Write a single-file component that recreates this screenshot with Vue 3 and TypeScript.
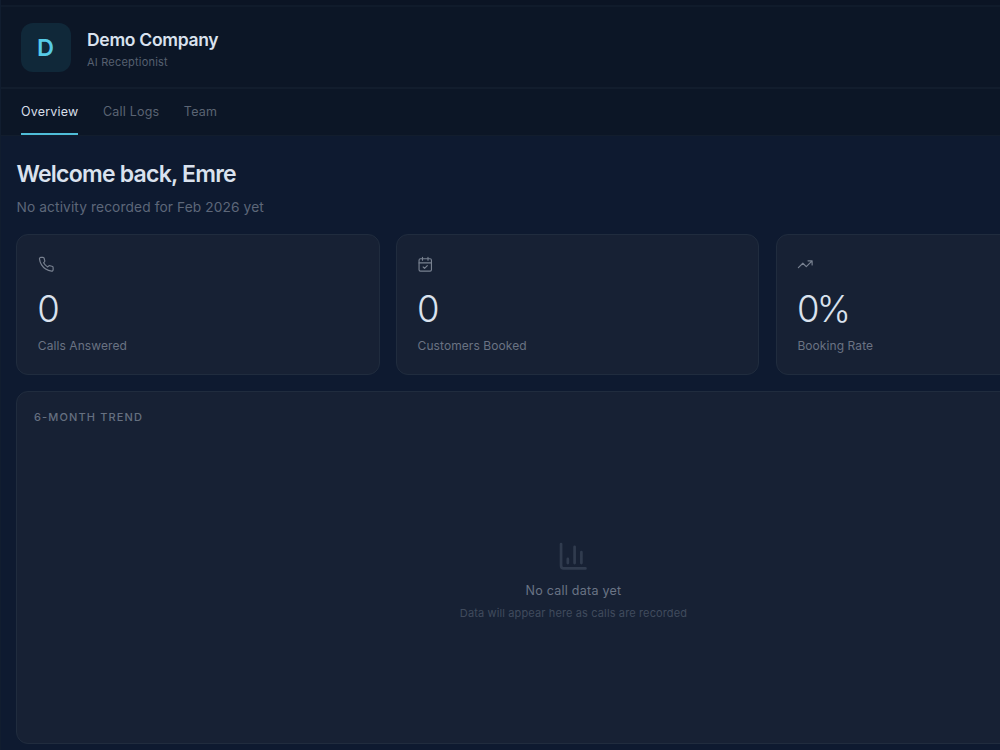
<script setup lang="ts">
interface Tab {
  label: string
  active: boolean
}

interface Stat {
  icon: 'phone' | 'calendar' | 'trend'
  value: string
  label: string
}

const tabs: Tab[] = [
  { label: 'Overview', active: true },
  { label: 'Call Logs', active: false },
  { label: 'Team', active: false },
]

const stats: Stat[] = [
  { icon: 'phone', value: '0', label: 'Calls Answered' },
  { icon: 'calendar', value: '0', label: 'Customers Booked' },
  { icon: 'trend', value: '0%', label: 'Booking Rate' },
]
</script>

<template>
  <div class="app">
    <header class="header">
      <div class="logo">D</div>
      <div class="brand">
        <div class="company">Demo Company</div>
        <div class="product">AI Receptionist</div>
      </div>
    </header>

    <nav class="tabs">
      <a v-for="tab in tabs" :key="tab.label" class="tab" :class="{ active: tab.active }">{{ tab.label }}</a>
    </nav>

    <main class="content">
      <h1 class="title">Welcome back, Emre</h1>
      <p class="subtitle">No activity recorded for Feb 2026 yet</p>

      <section class="stats">
        <article v-for="stat in stats" :key="stat.label" class="card">
          <svg class="stat-icon" viewBox="0 0 24 24">
            <path
              v-if="stat.icon === 'phone'"
              d="M22 16.92v3a2 2 0 0 1-2.18 2 19.79 19.79 0 0 1-8.63-3.07 19.5 19.5 0 0 1-6-6 19.79 19.79 0 0 1-3.07-8.67A2 2 0 0 1 4.11 2h3a2 2 0 0 1 2 1.72 12.84 12.84 0 0 0 .7 2.81 2 2 0 0 1-.45 2.11L8.09 9.91a16 16 0 0 0 6 6l1.27-1.27a2 2 0 0 1 2.11-.45 12.84 12.84 0 0 0 2.81.7A2 2 0 0 1 22 16.92z"
            />
            <template v-else-if="stat.icon === 'calendar'">
              <path d="M8 2v4M16 2v4M3 10h18" />
              <rect x="3" y="4" width="18" height="18" rx="2" />
              <path d="m9 16 2 2 4-4" />
            </template>
            <path v-else d="M16 7h6v6M22 7l-8.5 8.5-5-5L2 17" />
          </svg>
          <div class="value">{{ stat.value }}</div>
          <div class="label">{{ stat.label }}</div>
        </article>
      </section>

      <section class="panel">
        <h2 class="panel-title">6-Month Trend</h2>
        <div class="empty">
          <svg class="empty-icon" viewBox="0 0 24 24">
            <path d="M3 3v16a2 2 0 0 0 2 2h16M18 17V9M13 17V5M8 17v-3" />
          </svg>
          <div class="empty-title">No call data yet</div>
          <div class="empty-text">Data will appear here as calls are recorded</div>
        </div>
      </section>
    </main>
  </div>
</template>

<style>
body {
  overflow: hidden;
  background: #0e1a30;
}
</style>

<style scoped>
.app {
  box-sizing: border-box;
  width: 1000px;
  height: 750px;
  overflow: hidden;
  padding-top: 5px;
  border-left: 1px solid #111d2f;
  background: #0b1424;
  color: #dae2ee;
  font-family: Inter, "Liberation Sans", sans-serif;
}

.header {
  box-sizing: border-box;
  height: 84px;
  display: flex;
  align-items: center;
  gap: 16px;
  padding-left: 20px;
  border-top: 2px solid #101b2b;
  border-bottom: 2px solid #121d2d;
  background: #0c1626;
}

.logo {
  width: 50px;
  height: 49px;
  border-radius: 12px;
  background: #102839;
  color: #56cbe7;
  font-size: 23.5px;
  font-weight: 600;
  line-height: 50px;
  text-align: center;
  text-indent: -1px;
}

.brand {
  padding-top: 3px;
}

.company {
  font-size: 17.5px;
  font-weight: 600;
  line-height: 26px;
  letter-spacing: -0.3px;
}

.product {
  margin-top: 1px;
  color: #566070;
  font-size: 11px;
  line-height: 17px;
  letter-spacing: 0.2px;
}

.tabs {
  box-sizing: border-box;
  height: 47px;
  display: flex;
  gap: 24.5px;
  padding-left: 20px;
  border-bottom: 1px solid #121d2d;
  background: #0c1626;
}

.tab {
  box-sizing: border-box;
  height: 46px;
  border-bottom: 2px solid transparent;
  color: #5b6473;
  font-size: 12.5px;
  line-height: 45px;
  letter-spacing: 0.2px;
}

.tab.active {
  border-bottom-color: #4fbdd8;
  color: #d8dfe9;
}

.content {
  height: 614px;
  padding: 22px 0 0 15px;
  background: #0e1a30;
}

.title {
  margin: 0;
  padding-left: 0.5px;
  font-size: 23px;
  font-weight: 600;
  line-height: 32px;
  letter-spacing: -0.77px;
}

.subtitle {
  margin: 7px 0 0;
  padding-left: 0.5px;
  color: #5d6779;
  font-size: 13.75px;
  line-height: 20px;
  letter-spacing: 0.1px;
}

.stats {
  display: grid;
  grid-template-columns: repeat(3, 363.5px);
  gap: 16.3px;
  margin-top: 17px;
}

.card {
  box-sizing: border-box;
  height: 141px;
  padding: 20.5px 20.8px;
  border: 1px solid #202c3e;
  border-radius: 12px;
  background: #172134;
}

.stat-icon {
  display: block;
  width: 16.5px;
  height: 16.5px;
  margin-left: -0.3px;
  fill: none;
  stroke: #788190;
  stroke-width: 1.7;
  stroke-linecap: round;
  stroke-linejoin: round;
}

.value {
  margin-top: 16px;
  font-size: 36.5px;
  font-weight: 300;
  line-height: 42px;
  letter-spacing: -2.8px;
  text-indent: -0.5px;
}

.label {
  margin-top: 7px;
  color: #6a7383;
  font-size: 12px;
  line-height: 18px;
  letter-spacing: 0.08px;
}

.panel {
  box-sizing: border-box;
  width: 1123px;
  height: 353px;
  margin-top: 16px;
  padding: 16px 25px 16px 17px;
  border: 1px solid #202c3e;
  border-radius: 12px;
  background: #172134;
}

.panel-title {
  margin: 0;
  color: #667080;
  font-size: 11px;
  font-weight: 500;
  line-height: 18px;
  letter-spacing: 1.13px;
  text-transform: uppercase;
}

.empty {
  display: flex;
  flex-direction: column;
  align-items: center;
  padding-top: 113.5px;
}

.empty-icon {
  width: 32.5px;
  height: 32.5px;
  fill: none;
  stroke: #303b4e;
  stroke-width: 2;
  stroke-linecap: round;
  stroke-linejoin: round;
}

.empty-title {
  margin-top: 10px;
  color: #6a7485;
  font-size: 12.5px;
  line-height: 18px;
  letter-spacing: 0.25px;
}

.empty-text {
  margin-top: 5px;
  color: #404b5d;
  font-size: 11px;
  line-height: 16px;
  letter-spacing: 0.13px;
}
</style>
